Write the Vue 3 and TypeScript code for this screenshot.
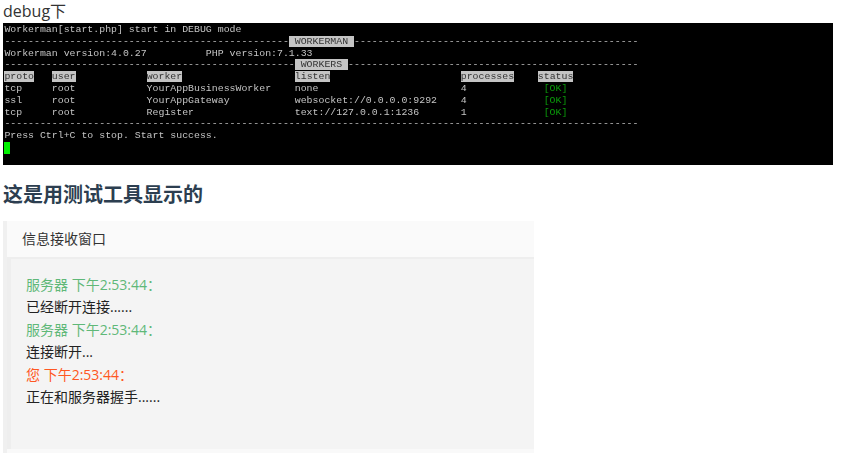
<script setup lang="ts">
interface Msg { from: string; tone: string; text: string }
const messages: Msg[] = [
  { from: '服务器 下午2:53:44：', tone: 'green', text: '已经断开连接......' },
  { from: '服务器 下午2:53:44：', tone: 'green', text: '连接断开...' },
  { from: '您 下午2:53:44：', tone: 'red', text: '正在和服务器握手......' },
]
const d = (n: number) => '-'.repeat(n)
const s = (n: number) => ' '.repeat(n)
</script>

<template>
  <main class="page">
    <div class="debug">debug下</div>
    <div class="terminal">
      <pre class="screen">Workerman[start.php] start in DEBUG mode
{{ d(48) }}<span class="hd"> WORKERMAN </span>{{ d(48) }}
Workerman version:4.0.27{{ s(10) }}PHP version:7.1.33
{{ d(49) }}<span class="hd"> WORKERS </span>{{ d(49) }}
<span class="hd">proto</span>{{ s(3) }}<span class="hd">user</span>{{ s(12) }}<span class="hd">worker</span>{{ s(19) }}<span class="hd">listen</span>{{ s(22) }}<span class="hd">processes</span>{{ s(4) }}<span class="hd">status</span>
tcp{{ s(5) }}root{{ s(12) }}YourAppBusinessWorker{{ s(4) }}none{{ s(24) }}4{{ s(13) }}<span class="ok">[OK]</span>
ssl{{ s(5) }}root{{ s(12) }}YourAppGateway{{ s(11) }}websocket://0.0.0.0:9292{{ s(4) }}4{{ s(13) }}<span class="ok">[OK]</span>
tcp{{ s(5) }}root{{ s(12) }}Register{{ s(17) }}text://127.0.0.1:1236{{ s(7) }}1{{ s(13) }}<span class="ok">[OK]</span>
{{ d(107) }}
Press Ctrl+C to stop. Start success.
<span class="cursor"></span></pre>
    </div>
    <h3 class="title">这是用测试工具显示的</h3>
    <section class="card">
      <header class="card-head">信息接收窗口</header>
      <blockquote class="quote">
        <template v-for="(m, i) in messages" :key="i">
          <div :class="m.tone">{{ m.from }}</div>
          <div class="msg">{{ m.text }}</div>
        </template>
      </blockquote>
    </section>
  </main>
</template>

<style scoped>
.page {
  padding: 0 3px;
  width: 847px;
  font-family: "Open Sans", "Noto Sans CJK SC", sans-serif;
  color: #333;
}
.debug {
  font-size: 16px;
  line-height: 23px;
  height: 23px;
  color: #333;
}
.terminal {
  width: 830px;
  height: 142px;
  background: #000;
  overflow: hidden;
}
.screen {
  margin: 0;
  padding: 1px 0 0 1.4px;
  font-family: "Liberation Mono", monospace;
  font-size: 9.9px;
  line-height: 11.8px;
  color: #c4c4c4;
  filter: blur(0.4px);
}
.hd {
  background: #c4c4c4;
  color: #333;
}
.ok { color: #0a9a0a; }
.cursor {
  display: inline-block;
  width: 6px;
  height: 12px;
  background: #00f000;
  vertical-align: top;
}
.title {
  margin: 0;
  padding-top: 16px;
  font-size: 20px;
  line-height: 28px;
  font-weight: 700;
  color: #2c3e50;
}
.card {
  margin-top: 12px;
  width: 531px;
  height: 232px;
  border-left: 4px solid #f0f0f0;
  box-sizing: border-box;
  background: #f9f9f9;
  display: flex;
  flex-direction: column;
}
.card-head {
  height: 36px;
  line-height: 36px;
  padding-left: 15px;
  font-size: 14px;
  background: #fafafa;
  border-bottom: 2px solid #eee;
  flex: none;
}
.quote {
  margin: 0;
  flex: none;
  height: 190px;
  box-sizing: border-box;
  padding: 15px;
  background: #f4f4f4;
  border-left: 4px solid #eee;
  font-size: 14px;
  line-height: 22.4px;
}
.green { color: #5fb878; }
.red { color: #ff5722; }
.msg { color: #222; }
</style>
